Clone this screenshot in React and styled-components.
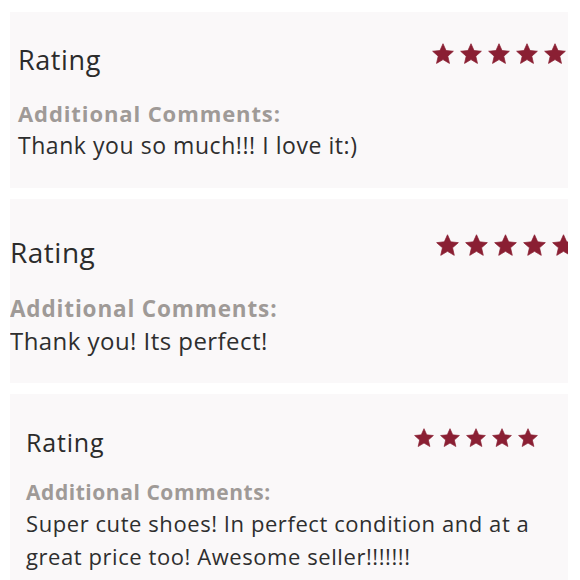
import React from 'react';
import styled, { createGlobalStyle } from 'styled-components';

const GlobalStyle = createGlobalStyle`
  html, body {
    margin: 0;
    padding: 0;
    background: #ffffff;
    font-family: "Open Sans", Lato, sans-serif;
  }
`;

const Page = styled.div`
  width: 580px;
  height: 580px;
  overflow: hidden;
  display: flex;
  flex-direction: column;
  padding: 12px 12px 0 10px;
  box-sizing: border-box;
  gap: 11px;
`;

const Card = styled.section`
  background: #faf8f9;
  overflow: hidden;
  flex-shrink: 0;
  padding: ${(p) => `${p.$top}px ${p.$right}px ${p.$bottom}px ${p.$left}px`};
  box-sizing: border-box;
`;

const Header = styled.header`
  display: flex;
  justify-content: space-between;
  align-items: flex-start;
`;

const Title = styled.h2`
  margin: 0;
  font-weight: 400;
  color: #2b2b2b;
  font-size: ${(p) => p.$size}px;
  letter-spacing: ${(p) => p.$track}px;
  line-height: 36px;
`;

const StarRow = styled.div`
  display: flex;
  gap: ${(p) => p.$gap}px;
  margin-top: ${(p) => p.$offset}px;
  margin-right: ${(p) => p.$right}px;
`;

const Label = styled.h3`
  margin: ${(p) => p.$gap}px 0 0;
  font-weight: 700;
  color: #9f9a97;
  font-size: ${(p) => p.$size}px;
  letter-spacing: ${(p) => p.$track}px;
  line-height: 30px;
`;

const Comment = styled.p`
  margin: 0;
  color: #2e2e2e;
  font-size: ${(p) => p.$size}px;
  letter-spacing: ${(p) => p.$track}px;
  line-height: ${(p) => p.$line}px;
`;

function Star({ size }) {
  return (
    <svg width={size} height={size} viewBox="0 0 24 24">
      <path
        d="M12 0.8l3.3 7.4 8 .8-6.05 5.35 1.8 7.9L12 18.1l-7.05 4.15 1.8-7.9L.7 9l8-.8z"
        fill="#8a1f33"
        stroke="#8a1f33"
        strokeWidth="0.8"
        strokeLinejoin="round"
      />
    </svg>
  );
}

const reviews = [
  {
    pad: { top: 30, right: 2, bottom: 26, left: 8 },
    title: 27, titleTrack: 0.6, star: 22, starGap: 6, starOffset: 1, starRight: 0,
    label: 22, labelTrack: 0.9, labelGap: 20, body: 23, bodyTrack: 0.55, line: 34,
    text: 'Thank you so much!!! I love it:)',
  },
  {
    pad: { top: 35, right: 0, bottom: 25, left: 0 },
    title: 28, titleTrack: 0.5, star: 23, starGap: 6, starOffset: 0, starRight: -7,
    label: 22.5, labelTrack: 0.85, labelGap: 24, body: 24, bodyTrack: 0.45, line: 34,
    text: 'Thank you! Its perfect!',
  },
  {
    pad: { top: 30, right: 30, bottom: 20, left: 16 },
    title: 25, titleTrack: 0.8, star: 20, starGap: 6, starOffset: 4, starRight: 0,
    label: 21, labelTrack: 0.55, labelGap: 17, body: 22, bodyTrack: 0.57, line: 33,
    text: 'Super cute shoes! In perfect condition and at a great price too! Awesome seller!!!!!!!',
  },
];

export default function App() {
  return (
    <>
      <GlobalStyle />
      <Page>
        {reviews.map((r) => (
          <Card key={r.text} $top={r.pad.top} $right={r.pad.right} $bottom={r.pad.bottom} $left={r.pad.left}>
            <Header>
              <Title $size={r.title} $track={r.titleTrack}>Rating</Title>
              <StarRow $gap={r.starGap} $offset={r.starOffset} $right={r.starRight}>
                {[0, 1, 2, 3, 4].map((i) => <Star key={i} size={r.star} />)}
              </StarRow>
            </Header>
            <Label $size={r.label} $track={r.labelTrack} $gap={r.labelGap}>Additional Comments:</Label>
            <Comment $size={r.body} $track={r.bodyTrack} $line={r.line}>{r.text}</Comment>
          </Card>
        ))}
      </Page>
    </>
  );
}
